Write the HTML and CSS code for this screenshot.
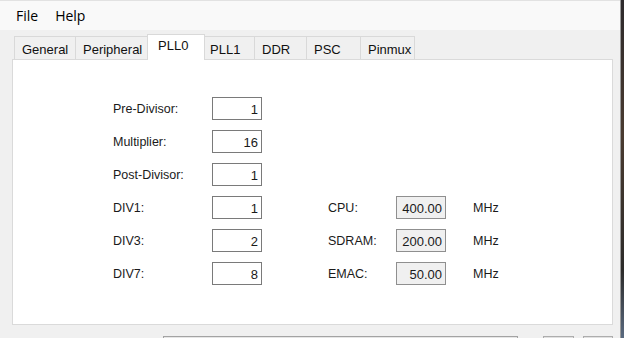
FILE: index.html
```html
<!DOCTYPE html>
<html lang="en">
<head>
    <meta charset="UTF-8">
    <meta name="viewport" content="width=device-width, initial-scale=1.0">
    <title>PLL Settings</title>
    <link rel="stylesheet" href="styles.css">
</head>
<body>
    <div class="window">
        <div class="menubar">
            <span class="menu-item">File</span>
            <span class="menu-item">Help</span>
        </div>
        <div class="client">
            <div class="tabs">
                <div class="tab tab-general">General</div>
                <div class="tab tab-peripheral">Peripheral</div>
                <div class="tab tab-pll0 selected">PLL0</div>
                <div class="tab tab-pll1">PLL1</div>
                <div class="tab tab-ddr">DDR</div>
                <div class="tab tab-psc">PSC</div>
                <div class="tab tab-pinmux">Pinmux</div>
            </div>
            <div class="panel">
                <div class="form">
                    <div class="row">
                        <span class="lbl">Pre-Divisor:</span>
                        <span class="num">1</span>
                    </div>
                    <div class="row">
                        <span class="lbl">Multiplier:</span>
                        <span class="num">16</span>
                    </div>
                    <div class="row">
                        <span class="lbl">Post-Divisor:</span>
                        <span class="num">1</span>
                    </div>
                    <div class="row">
                        <span class="lbl">DIV1:</span>
                        <span class="num">1</span>
                        <span class="lbl2">CPU:</span>
                        <span class="num ro">400.00</span>
                        <span class="unit">MHz</span>
                    </div>
                    <div class="row">
                        <span class="lbl">DIV3:</span>
                        <span class="num">2</span>
                        <span class="lbl2">SDRAM:</span>
                        <span class="num ro">200.00</span>
                        <span class="unit">MHz</span>
                    </div>
                    <div class="row">
                        <span class="lbl">DIV7:</span>
                        <span class="num">8</span>
                        <span class="lbl2">EMAC:</span>
                        <span class="num ro">50.00</span>
                        <span class="unit">MHz</span>
                    </div>
                </div>
            </div>
            <div class="statusrow">
                <div class="progress"></div>
                <div class="btn btn-a"></div>
                <div class="btn btn-b"></div>
            </div>
        </div>
    </div>
    <div class="desktop"></div>
</body>
</html>
```

FILE: styles.css
```css
body {
    margin: 0;
    width: 624px;
    height: 338px;
    overflow: hidden;
    display: flex;
    background: #f0f0f0;
    font-family: 'Liberation Sans', Arial, sans-serif;
    color: #1a1a1a;
}

.window {
    width: 620px;
    flex-shrink: 0;
    background: #f0f0f0;
}

.desktop {
    width: 4px;
    flex-shrink: 0;
    background: linear-gradient(#2d2a2c, #4a3b30 40%, #2c2b2a 80%, #5a6a80);
    border-left: 1px solid #9a9a9a;
    box-sizing: border-box;
}

/* Menu */
.menubar {
    height: 30px;
    box-sizing: border-box;
    border-top: 1px solid #e2e2e2;
    background: #f9f9f9;
    display: flex;
    align-items: center;
    padding-left: 9px;
    font-family: 'Open Sans', 'Noto Sans', sans-serif;
    font-size: 14px;
    color: #000;
}

.menu-item {
    padding: 0 7px;
    margin-right: 3px;
}

/* Tabs */
.client {
    padding: 4px 7px 0 12px;
}

.tabs {
    display: flex;
    align-items: flex-end;
    height: 25px;
    padding-left: 2px;
    font-size: 13px;
    position: relative;
    z-index: 1;
}

.tab {
    height: 23px;
    box-sizing: border-box;
    border: 1px solid #d9d9d9;
    border-bottom: none;
    margin-right: -1px;
    padding: 5px 0 0 7px;
    background: #f0f0f0;
    color: #111;
}

.tab.selected {
    height: 26px;
    margin-bottom: -1px;
    padding: 3px 0 0 10px;
    background: #fff;
    position: relative;
}

.tab-general { width: 62px; }
.tab-peripheral { width: 73px; }
.tab-pll0 { width: 58px; }
.tab-pll1 { width: 51px; padding-left: 5px; }
.tab-ddr { width: 53px; }
.tab-psc { width: 55px; }
.tab-pinmux { width: 55px; }

.panel {
    height: 266px;
    box-sizing: border-box;
    border: 1px solid #dadada;
    background: #fff;
    padding: 37px 0 0 100px;
}

/* Form */
.form {
    display: flex;
    flex-direction: column;
    gap: 10px;
    font-size: 12.5px;
}

.row {
    display: flex;
    align-items: center;
    height: 23px;
}

.lbl {
    width: 99px;
}

.lbl2 {
    width: 68px;
    margin-left: 66px;
}

.num {
    width: 50px;
    height: 23px;
    box-sizing: border-box;
    border: 1px solid #7a7a7a;
    text-align: right;
    padding: 4px 3px 0 0;
    font-size: 13px;
    background: #fff;
}

.num.ro {
    background: #f0f0f0;
    border-color: #8f8f8f;
}

.unit {
    margin-left: 27px;
}

/* Bottom row, cut off by the window edge */
.statusrow {
    display: flex;
    margin-top: 11px;
    height: 2px;
}

.progress {
    width: 361px;
    margin-left: 151px;
    border: 1px solid #a3a3a3;
    border-bottom: none;
    background: #e6e6e6;
}

.btn {
    width: 29px;
    border: 1px solid #adadad;
    border-bottom: none;
    background: #e1e1e1;
}

.btn-a {
    margin-left: 25px;
}

.btn-b {
    margin-left: 9px;
}
```
